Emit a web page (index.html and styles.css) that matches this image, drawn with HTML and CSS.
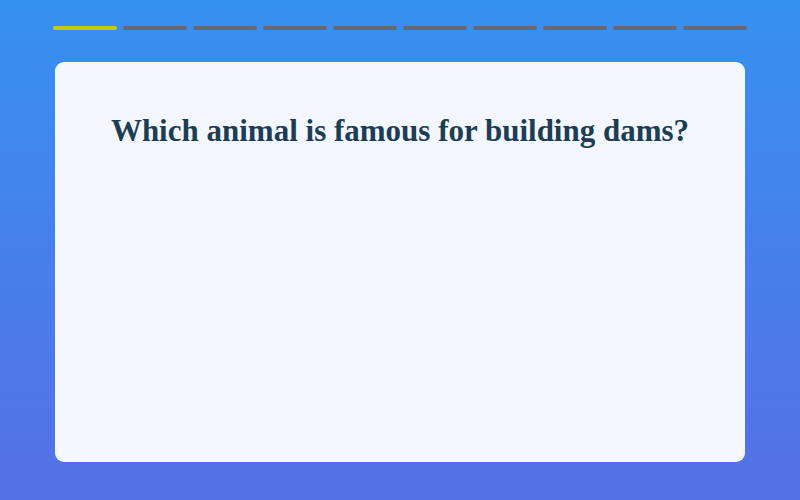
FILE: index.html
```html
<!DOCTYPE html>
<html>
<head>
<meta charset="utf-8">
<link rel="stylesheet" href="styles.css">
</head>
<body>
<div class="page">
  <div class="progress">
    <span class="seg done"></span>
    <span class="seg"></span>
    <span class="seg"></span>
    <span class="seg"></span>
    <span class="seg"></span>
    <span class="seg"></span>
    <span class="seg"></span>
    <span class="seg"></span>
    <span class="seg"></span>
    <span class="seg"></span>
  </div>
  <div class="card">
    <h1 class="question">Which animal is famous for building dams?</h1>
  </div>
</div>
</body>
</html>
```
FILE: styles.css
```css
html, body {
  margin: 0;
  padding: 0;
}
body {
  width: 800px;
  height: 500px;
  background: linear-gradient(180deg, #3690f2 0%, #4d79ea 70%, #5570e6 100%);
  font-family: "Liberation Serif", serif;
}
.page {
  padding: 26px 53px 0 53px;
}
.progress {
  display: flex;
  gap: 6px;
  height: 4px;
}
.seg {
  flex: 1;
  height: 4px;
  border-radius: 2px;
  background: #666a70;
}
.seg.done {
  background: #c6cb0c;
}
.card {
  margin: 32px 2px 0 2px;
  height: 400px;
  background: #f4f7ff;
  border-radius: 9px;
  padding-top: 49px;
  box-sizing: border-box;
}
.question {
  margin: 0;
  text-align: center;
  font-size: 31px;
  font-weight: bold;
  color: #1c3e52;
  line-height: 40px;
}
```
